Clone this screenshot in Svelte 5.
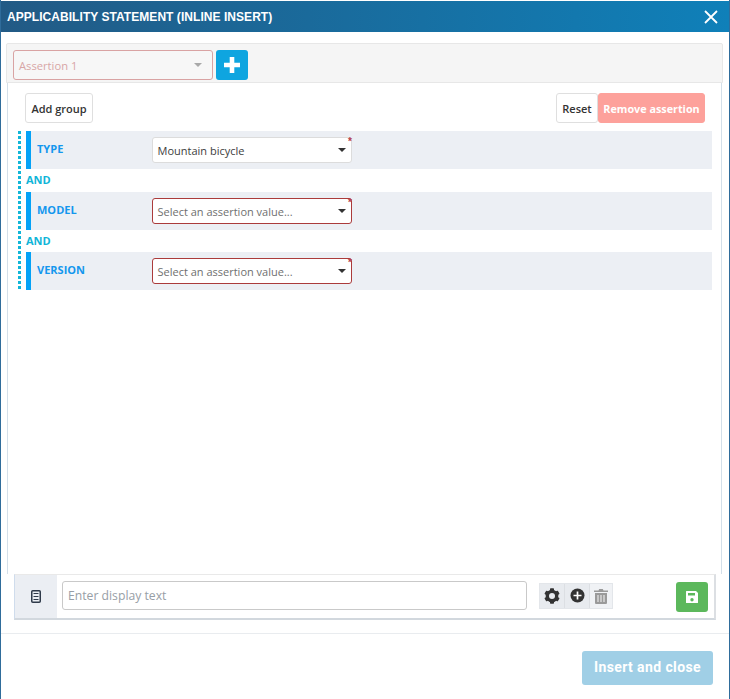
<script>
  const rows = [
    { label: 'TYPE', value: 'Mountain bicycle', invalid: false },
    { label: 'MODEL', value: 'Select an assertion value...', invalid: true },
    { label: 'VERSION', value: 'Select an assertion value...', invalid: true }
  ];
  const teeth = [0, 60, 120];
</script>

<div class="dialog">
  <header class="title">
    <span>APPLICABILITY STATEMENT (INLINE INSERT)</span>
    <svg class="close" width="14" height="14" viewBox="0 0 14 14"><path d="M1 1 L13 13 M13 1 L1 13" stroke="#fff" stroke-width="1.8" /></svg>
  </header>

  <div class="body">
    <div class="toolbar">
      <div class="assertion">
        <span>Assertion 1</span>
        <i class="caret grey"></i>
      </div>
      <button class="plus" aria-label="Add assertion">
        <svg width="18" height="18" viewBox="0 0 18 18"><path d="M9 1 V17 M1 9 H17" stroke="#fff" stroke-width="4.6" /></svg>
      </button>
    </div>

    <div class="content">
      <div class="actions">
        <button class="btn add">Add group</button>
        <div class="right">
          <button class="btn reset">Reset</button>
          <button class="btn remove">Remove assertion</button>
        </div>
      </div>

      <div class="rows">
        {#each rows as row, i}
          {#if i > 0}
            <div class="and" class:second={i === 2}>AND</div>
          {/if}
          <div class="row">
            <span class="label">{row.label}</span>
            <div class="select" class:invalid={row.invalid}>
              <span>{row.value}</span>
              <i class="caret"></i>
              <b class="star">*</b>
            </div>
          </div>
        {/each}
      </div>
    </div>

    <div class="display">
      <div class="doc">
        <svg width="10" height="13" viewBox="0 0 10 13"><rect x="0.75" y="0.75" width="8.5" height="11.5" rx="1" fill="none" stroke="#2f3a4a" stroke-width="1.5" /><path d="M2.5 3.5 H7.5 M2.5 6.5 H7.5 M2.5 9.5 H7.5" stroke="#2f3a4a" stroke-width="1.2" /></svg>
      </div>
      <div class="input">Enter display text</div>
      <div class="tools">
        <span class="tool">
          <svg width="16" height="16" viewBox="0 0 24 24">
            <circle cx="12" cy="12" r="7" fill="none" stroke="#333" stroke-width="5" />
            {#each teeth as a}
              <rect x="9" y="0.500" width="6" height="23" rx="1" fill="#333" transform="rotate({a} 12 12)" mask="url(#hole)" />
            {/each}
            <circle cx="12" cy="12" r="4.500" fill="#e8ebef" />
          </svg>
        </span>
        <span class="tool">
          <svg width="15" height="15" viewBox="0 0 15 15"><circle cx="7.500" cy="7.500" r="7" fill="#333" /><path d="M7.500 3.500 V11.500 M3.500 7.500 H11.500" stroke="#fff" stroke-width="1.700" /></svg>
        </span>
        <span class="tool off">
          <svg width="14" height="16" viewBox="0 0 14 16"><path fill="#9a9a9a" d="M0 2.500h4.500L5.200 1h3.600l.7 1.500H14V4H0zM1 5h12v10a1 1 0 0 1-1 1H2a1 1 0 0 1-1-1z"/><path d="M4 7V14M7 7V14M10 7V14" stroke="#eee" stroke-width="1.100"/></svg>
        </span>
      </div>
      <button class="save" aria-label="Save">
        <svg width="14" height="14" viewBox="0 0 14 14"><path fill="#fff" fill-rule="evenodd" d="M1.500 1H11l2 2v9.500a.5.5 0 0 1-.5.5h-11a.5.5 0 0 1-.5-.5v-11a.5.5 0 0 1 .5-.5zM3 3v2.500h7V3zM7 8a1.700 1.700 0 1 0 0 3.400A1.700 1.700 0 0 0 7 8z"/></svg>
      </button>
    </div>
  </div>

  <footer class="foot">
    <button class="insert">Insert and close</button>
  </footer>
</div>

<style>
  :global(body) {
    margin: 0;
    background: #fff;
  }
  .dialog {
    box-sizing: border-box;
    width: 730px;
    height: 699px;
    padding-top: 1px;
    border-left: 1px solid #2f6c9b;
    border-right: 1px solid #2f6c9b;
    display: flex;
    flex-direction: column;
    font-family: "Open Sans", "Noto Sans", sans-serif;
    background: #fff;
  }
  .title {
    height: 31px;
    flex: none;
    display: flex;
    align-items: center;
    justify-content: space-between;
    padding: 0 11px 0 6px;
    background: linear-gradient(90deg, #225a85, #0f80b9);
    color: #fff;
    font: bold 12px "Liberation Sans", Arial, sans-serif;
    letter-spacing: 0.05px;
  }
  .close {
    margin-top: 1px;
  }
  .body {
    flex: 1;
    min-height: 0;
    padding: 11px 6px 0 5px;
    border-bottom: 1px solid #e9ecef;
    display: flex;
    flex-direction: column;
  }
  .toolbar {
    height: 40px;
    flex: none;
    display: flex;
    align-items: flex-start;
    gap: 3px;
    box-sizing: border-box;
    padding: 6px 0 0 6px;
    background: #f5f5f5;
    border: 1px solid #e7e7e7;
    border-radius: 2px 2px 0 0;
  }
  .assertion {
    box-sizing: border-box;
    width: 200px;
    height: 30px;
    display: flex;
    align-items: center;
    justify-content: space-between;
    padding: 0 10px 0 5px;
    border: 1px solid #d9a3a3;
    border-radius: 3px;
    background: #f7f7f7;
    color: #d8a6a6;
    font-size: 11.200px;
  }
  .caret {
    width: 0;
    height: 0;
    border: 4.500px solid transparent;
    border-top: 4.500px solid #333;
    border-bottom: 0;
  }
  .caret.grey {
    border-top-color: #a9a9a9;
  }
  .plus {
    width: 32px;
    height: 30px;
    padding: 0;
    border: 0;
    border-radius: 3px;
    background: #0ea5e0;
    display: flex;
    align-items: center;
    justify-content: center;
  }
  .content {
    flex: 1;
    min-height: 0;
    margin: 0 1px;
    padding: 0 9px 0 10px;
    border: solid #d4dfe9;
    border-width: 0 1px;
  }
  .actions {
    display: flex;
    justify-content: space-between;
    padding: 10px 7px 0 7px;
    height: 38px;
  }
  .right {
    display: flex;
  }
  .btn {
    box-sizing: border-box;
    height: 30px;
    padding: 0;
    border: 1px solid #dfdfdf;
    border-radius: 3px;
    background: #fff;
    color: #333;
    font: 600 11px "Open Sans", sans-serif;
  }
  .add {
    width: 68px;
  }
  .reset {
    width: 42px;
  }
  .remove {
    width: 107px;
    background: #fda19b;
    border-color: #fda19b;
    color: #fff;
    font-weight: 700;
    font-size: 10.800px;
  }
  .rows {
    padding-left: 7px;
    background-image: linear-gradient(#10b5d8 60%, transparent 60%);
    background-size: 3px 5px;
    background-repeat: repeat-y;
    height: 159px;
  }
  .row {
    box-sizing: border-box;
    height: 38px;
    display: flex;
    align-items: center;
    margin-left: 1px;
    border-left: 5px solid #04a2f7;
    background: #eceff4;
  }
  .label {
    width: 115px;
    padding-left: 6px;
    margin-top: -3px;
    color: #1497ee;
    font-size: 11px;
    font-weight: 700;
  }
  .select {
    position: relative;
    box-sizing: border-box;
    width: 200px;
    height: 26px;
    display: flex;
    align-items: center;
    justify-content: space-between;
    padding: 0 5px 0 4.500px;
    border: 1px solid #dcdcdc;
    border-radius: 3px;
    background: #fff;
    color: #3d3d3d;
    font-size: 11px;
  }
  .select.invalid {
    border-color: #ab3b3b;
    color: #6f6f6f;
  }
  .star {
    position: absolute;
    top: -1px;
    right: -1px;
    color: #b23a48;
    font: 700 10px/1 "Liberation Sans", sans-serif;
  }
  .and {
    height: 23px;
    line-height: 22px;
    margin-left: 1px;
    color: #10b5d8;
    font-size: 11px;
    font-weight: 700;
  }
  .and.second {
    height: 22px;
  }
  .display {
    box-sizing: border-box;
    flex: none;
    height: 46px;
    margin: 0 7px 13px 8px;
    display: flex;
    align-items: center;
    background: #fff;
    border: 1px solid #e9e9e9;
    border-left-color: #cfdcec;
    border-bottom: 2px solid #d2d8de;
    border-right: 2px solid #dcdfe3;
  }
  .doc {
    width: 42px;
    align-self: stretch;
    background: #ebeef3;
    display: flex;
    align-items: center;
    justify-content: center;
  }
  .input {
    box-sizing: border-box;
    width: 465px;
    height: 29px;
    margin: -2px 0 0 5px;
    padding-left: 5px;
    line-height: 27px;
    border: 1px solid #c9c9c9;
    border-radius: 3px;
    color: #979ea6;
    font-size: 12.200px;
  }
  .tools {
    display: flex;
    margin: -2px 0 0 12px;
    height: 26px;
    background: #e8ebef;
    border: 1px solid #e3e6ea;
    box-sizing: border-box;
  }
  .tool {
    width: 25px;
    box-sizing: border-box;
    border-right: 1px solid #dcdfe3;
    display: flex;
    align-items: center;
    justify-content: center;
  }
  .tool.off {
    width: 22px;
    background: #f0f2f5;
    border: 0;
  }
  .save {
    width: 32px;
    height: 30px;
    margin-left: 63px;
    padding: 0;
    border: 0;
    border-radius: 3px;
    background: #5cb85c;
    display: flex;
    align-items: center;
    justify-content: center;
  }
  .foot {
    flex: none;
    height: 65px;
    display: flex;
    justify-content: flex-end;
    padding: 17px 16px 0 0;
    box-sizing: border-box;
  }
  .insert {
    width: 131px;
    height: 34px;
    border: 0;
    border-radius: 3px;
    background: #a0cfe6;
    color: #fff;
    font: 700 14px Roboto, "Open Sans", sans-serif;
    letter-spacing: 0.4px;
    padding: 0 0 2px;
  }
</style>
